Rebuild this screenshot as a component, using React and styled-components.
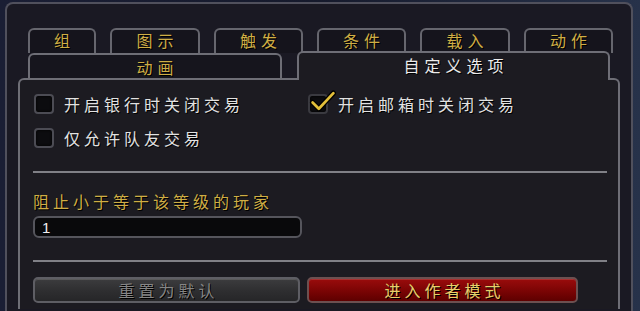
import React, { useState } from "react";
import styled, { createGlobalStyle } from "styled-components";

const GlobalStyle = createGlobalStyle`
  html, body {
    margin: 0;
    padding: 0;
    height: 100%;
    overflow: hidden;
    background: linear-gradient(90deg, #1a1e34 0%, #161a2c 50%, #27324a 100%);
  }
  * {
    box-sizing: border-box;
  }
`;

const font = `"Noto Sans CJK SC", "Noto Sans", sans-serif`;

const topTabs = [
  { label: "组", width: 68 },
  { label: "图示", width: 90 },
  { label: "触发", width: 89 },
  { label: "条件", width: 89 },
  { label: "载入", width: 90 },
  { label: "动作", width: 89 },
];

const App = () => {
  const [bank, setBank] = useState(false);
  const [mail, setMail] = useState(true);
  const [party, setParty] = useState(false);
  const [level, setLevel] = useState("1");

  return (
    <>
      <GlobalStyle />
      <Frame>
        <TabRow>
          {topTabs.map((t) => (
            <Tab key={t.label} $width={t.width}>
              {t.label}
            </Tab>
          ))}
        </TabRow>
        <SubTabRow>
          <SubTab $width={254}>动画</SubTab>
          <SubTab $width={313} $active>
            自定义选项
          </SubTab>
        </SubTabRow>
        <Panel>
          <Options>
            <Option onClick={() => setBank(!bank)}>
              <Box $checked={bank}>{bank && <Check />}</Box>
              <OptionText>开启银行时关闭交易</OptionText>
            </Option>
            <Option onClick={() => setMail(!mail)}>
              <Box $checked={mail}>{mail && <Check />}</Box>
              <OptionText>开启邮箱时关闭交易</OptionText>
            </Option>
            <Option onClick={() => setParty(!party)}>
              <Box $checked={party}>{party && <Check />}</Box>
              <OptionText>仅允许队友交易</OptionText>
            </Option>
          </Options>

          <Divider />

          <FieldLabel>阻止小于等于该等级的玩家</FieldLabel>
          <Input value={level} onChange={(e) => setLevel(e.target.value)} />

          <Divider $gap={22} />

          <Buttons>
            <Button $width={267}>重置为默认</Button>
            <Button $width={271} $primary>
              进入作者模式
            </Button>
          </Buttons>
        </Panel>
      </Frame>
    </>
  );
};

const Check = () => (
  <CheckSvg viewBox="0 0 26 24">
    <path
      d="M3 12 L9 18 L23 3"
      fill="none"
      stroke="#000"
      strokeWidth="5"
      strokeLinecap="round"
      strokeLinejoin="round"
    />
    <path
      d="M3 12 L9 18 L23 3"
      fill="none"
      stroke="#e2bf3a"
      strokeWidth="2.6"
      strokeLinecap="round"
      strokeLinejoin="round"
    />
  </CheckSvg>
);

const Frame = styled.div`
  margin: 2px 0 0 5px;
  width: 628px;
  height: 309px;
  background: #1a1923;
  border: 2px solid #50505c;
  border-bottom: none;
  border-radius: 8px 8px 0 0;
  padding: 24px 13px 0 11px;
  font-family: ${font};
`;

const TabRow = styled.div`
  display: flex;
  gap: 14px;
  margin-left: 10px;
  height: 25px;
`;

const Tab = styled.div`
  width: ${(p) => p.$width}px;
  height: 25px;
  display: flex;
  align-items: center;
  justify-content: center;
  padding: 0 0 3px 5px;
  background: #15141c;
  border: 2px solid #66666e;
  border-bottom: none;
  border-radius: 6px 6px 0 0;
  color: #cfae45;
  font-size: 16px;
  letter-spacing: 5px;
  text-shadow: 1px 1px 0 #000;
`;

const SubTabRow = styled.div`
  display: flex;
  align-items: flex-end;
  gap: 15px;
  margin: -2px 0 0 10px;
  height: 27px;
`;

const SubTab = styled.div`
  position: relative;
  z-index: ${(p) => (p.$active ? 2 : 1)};
  width: ${(p) => p.$width}px;
  height: ${(p) => (p.$active ? 29 : 25)}px;
  margin-bottom: ${(p) => (p.$active ? -2 : 0)}px;
  display: flex;
  align-items: center;
  justify-content: center;
  padding: 0 0 ${(p) => (p.$active ? 3 : 0)}px 5px;
  background: ${(p) => (p.$active ? "#1c1b21" : "#16151d")};
  border: 2px solid #6e6e76;
  border-bottom: none;
  border-radius: 6px 6px 0 0;
  color: ${(p) => (p.$active ? "#ececec" : "#cfae45")};
  font-size: 16px;
  letter-spacing: 5px;
  text-shadow: 1px 1px 0 #000;
`;

const Panel = styled.div`
  position: relative;
  z-index: 1;
  width: 602px;
  height: 231px;
  background: #1c1b21;
  border: 2px solid #6e6e76;
  border-bottom: none;
  border-radius: 6px 6px 0 0;
  padding: 14px 11px 0 13px;
  display: flex;
  flex-direction: column;
`;

const Options = styled.div`
  display: grid;
  grid-template-columns: 274px 1fr;
  grid-auto-rows: 20px;
  row-gap: 14px;
  padding-left: 1px;
`;

const Option = styled.div`
  display: flex;
  align-items: center;
  gap: 10px;
  cursor: pointer;
`;

const Box = styled.div`
  position: relative;
  width: 20px;
  height: 20px;
  flex: none;
  background: #0c0c0f;
  border: 2px solid ${(p) => (p.$checked ? "#3a3a40" : "#4c4c54")};
  border-radius: 4px;
  box-shadow: inset 0 0 3px #000;
`;

const CheckSvg = styled.svg`
  position: absolute;
  left: -1px;
  top: -6px;
  width: 28px;
  height: 25px;
`;

const OptionText = styled.span`
  color: #e2e2e2;
  font-size: 16px;
  letter-spacing: 4px;
  line-height: 20px;
  white-space: nowrap;
  text-shadow: 1px 1px 0 #000;
`;

const Divider = styled.div`
  height: 2px;
  margin-top: ${(p) => p.$gap ?? 23}px;
  background: #808086;
  flex: none;
`;

const FieldLabel = styled.div`
  margin-top: 18px;
  color: #cfae45;
  font-size: 16px;
  letter-spacing: 4px;
  line-height: 20px;
  text-shadow: 1px 1px 0 #000;
`;

const Input = styled.input`
  margin-top: 5px;
  width: 269px;
  height: 22px;
  padding: 0 0 0 7px;
  background: #09090b;
  border: 2px solid #55555c;
  border-radius: 6px;
  color: #f0f0f0;
  font-family: "Liberation Sans", sans-serif;
  font-size: 15px;
  outline: none;
`;

const Buttons = styled.div`
  display: flex;
  gap: 7px;
  margin-top: 15px;
`;

const Button = styled.button`
  width: ${(p) => p.$width}px;
  height: 26px;
  padding: 0 0 0 4px;
  border: 2px solid ${(p) => (p.$primary ? "#6c5050" : "#5e5e64")};
  border-radius: 5px;
  background: ${(p) =>
    p.$primary
      ? "linear-gradient(180deg, #9a0c0c 0%, #7a0404 55%, #5e0000 100%)"
      : "linear-gradient(180deg, #3c3c3e 0%, #2e2e30 55%, #262628 100%)"};
  box-shadow: inset 0 1px 0 rgba(255, 255, 255, 0.15);
  color: ${(p) => (p.$primary ? "#e8cf6a" : "#858585")};
  font-family: ${font};
  font-size: 16px;
  letter-spacing: 4px;
  line-height: 22px;
  text-shadow: 1px 1px 0 #000;
  cursor: pointer;
`;

export default App;
